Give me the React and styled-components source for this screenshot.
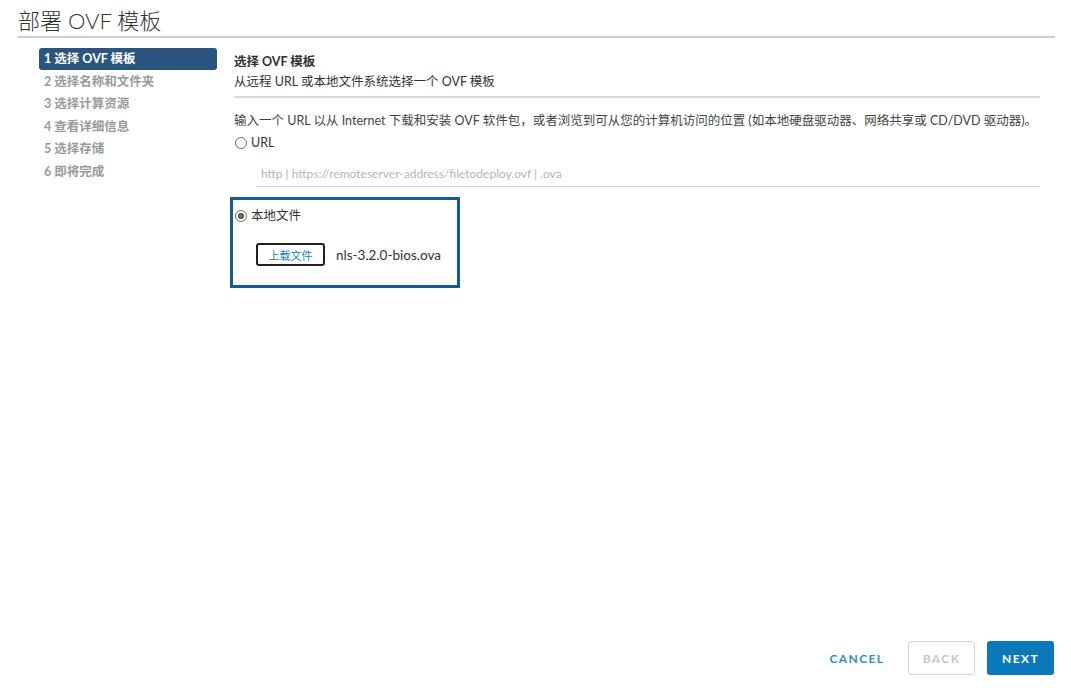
import React from "react";
import styled, { createGlobalStyle } from "styled-components";

const GlobalStyle = createGlobalStyle`
  html, body {
    margin: 0;
    padding: 0;
    background: #ffffff;
  }
  body {
    font-family: Lato, "Noto Sans", "Noto Sans CJK SC", sans-serif;
    color: #333;
  }
`;

const steps = [
  "1 选择 OVF 模板",
  "2 选择名称和文件夹",
  "3 选择计算资源",
  "4 查看详细信息",
  "5 选择存储",
  "6 即将完成",
];

function App() {
  return (
    <>
      <GlobalStyle />
      <Page>
        <Title>部署 OVF 模板</Title>
        <Body>
          <Sidebar>
            {steps.map((s, i) => (
              <Step key={s} active={i === 0}>
                {s}
              </Step>
            ))}
          </Sidebar>
          <Content>
            <Header>
              <HeaderTitle>选择 OVF 模板</HeaderTitle>
              <HeaderSub>从远程 URL 或本地文件系统选择一个 OVF 模板</HeaderSub>
            </Header>
            <Description>
              输入一个 URL 以从 Internet 下载和安装 OVF 软件包，或者浏览到可从您的计算机访问的位置 (如本地硬盘驱动器、网络共享或 CD/DVD 驱动器)。
            </Description>
            <RadioRow>
              <Radio />
              URL
            </RadioRow>
            <UrlInput placeholder="http | https://remoteserver-address/filetodeploy.ovf | .ova" />
            <Highlight>
              <RadioRow>
                <Radio checked />
                本地文件
              </RadioRow>
              <UploadRow>
                <UploadButton>上载文件</UploadButton>
                <FileName>nls-3.2.0-bios.ova</FileName>
              </UploadRow>
            </Highlight>
          </Content>
        </Body>
        <Footer>
          <LinkButton>CANCEL</LinkButton>
          <OutlineButton>BACK</OutlineButton>
          <PrimaryButton>NEXT</PrimaryButton>
        </Footer>
      </Page>
    </>
  );
}

const Page = styled.div`
  height: 693px;
  box-sizing: border-box;
  padding: 0 16px 18px 18px;
  display: flex;
  flex-direction: column;
`;

const Title = styled.div`
  font-family: Lato, "Noto Sans CJK SC", sans-serif;
  font-size: 22px;
  font-weight: 300;
  color: #333;
  height: 36px;
  line-height: 42px;
  border-bottom: 2px solid #cccccc;
  white-space: nowrap;
`;

const Body = styled.div`
  flex: 1;
  display: flex;
  padding: 10px 15px 0 21px;
  gap: 17px;
`;

const Sidebar = styled.div`
  width: 178px;
  flex: none;
  display: flex;
  flex-direction: column;
  gap: 0.5px;
`;

const Step = styled.div`
  height: 22px;
  line-height: 22px;
  padding-left: 5px;
  border-radius: 3px;
  font-size: 12.5px;
  font-weight: 700;
  white-space: nowrap;
  color: ${(p) => (p.active ? "#ffffff" : "#9a9a9a")};
  background: ${(p) => (p.active ? "#2b5581" : "transparent")};
`;

const Content = styled.div`
  flex: 1;
  display: flex;
  flex-direction: column;
  align-items: flex-start;
`;

const Header = styled.div`
  align-self: stretch;
  padding-top: 4px;
  padding-bottom: 4px;
  border-bottom: 2px solid #d8d8d8;
`;

const HeaderTitle = styled.div`
  font-size: 12.5px;
  font-weight: 700;
  color: #313131;
  line-height: 20px;
`;

const HeaderSub = styled.div`
  font-size: 12.5px;
  color: #333;
  line-height: 20px;
`;

const Description = styled.div`
  margin-top: 12px;
  font-size: 12.5px;
  color: #444;
  line-height: 22px;
  white-space: nowrap;
`;

const RadioRow = styled.div`
  display: flex;
  align-items: center;
  gap: 4px;
  font-size: 12.5px;
  color: #333;
  line-height: 22px;
`;

const Radio = styled.span`
  width: 12px;
  height: 12px;
  border-radius: 50%;
  border: 1px solid #6a6a6a;
  box-sizing: border-box;
  flex: none;
  margin-left: 1px;
  background: ${(p) =>
    p.checked ? "radial-gradient(circle, #666 0 3px, #fff 3.6px)" : "#fff"};
`;

const UrlInput = styled.input`
  align-self: stretch;
  margin: 9px 0 0 22px;
  padding: 0 0 3px 5px;
  border: none;
  border-bottom: 1px solid #cfcfcf;
  outline: none;
  font-family: Lato, "Noto Sans", sans-serif;
  font-size: 12px;
  color: #333;
  height: 20px;
  &::placeholder {
    color: #b5b5b5;
  }
`;

const Highlight = styled.div`
  margin: 10px 0 0 -4px;
  width: 223px;
  height: 80px;
  border: 3px solid #115c9c;
  padding: 5px 0 0 1px;
  box-sizing: content-box;
  display: flex;
  flex-direction: column;
`;

const UploadRow = styled.div`
  display: flex;
  align-items: center;
  gap: 11px;
  margin: 16px 0 0 22px;
`;

const UploadButton = styled.div`
  width: 65px;
  height: 19px;
  border: 2px solid #222;
  border-radius: 3px;
  display: flex;
  align-items: center;
  justify-content: center;
  font-size: 11px;
  color: #1a7fc0;
`;

const FileName = styled.div`
  font-size: 13.5px;
  color: #333;
`;

const Footer = styled.div`
  display: flex;
  justify-content: flex-end;
  align-items: center;
  gap: 12px;
  padding-right: 1px;
`;

const BaseButton = styled.div`
  height: 34px;
  box-sizing: border-box;
  display: flex;
  align-items: center;
  justify-content: center;
  font-size: 12px;
  font-weight: 700;
  letter-spacing: 1.4px;
  border-radius: 3px;
`;

const LinkButton = styled(BaseButton)`
  width: 78px;
  color: #2b8fd1;
`;

const OutlineButton = styled(BaseButton)`
  width: 67px;
  border: 1px solid #d5d5d5;
  color: #c6c6c6;
`;

const PrimaryButton = styled(BaseButton)`
  width: 67px;
  background: #0a79bc;
  color: #ffffff;
`;

export default App;
